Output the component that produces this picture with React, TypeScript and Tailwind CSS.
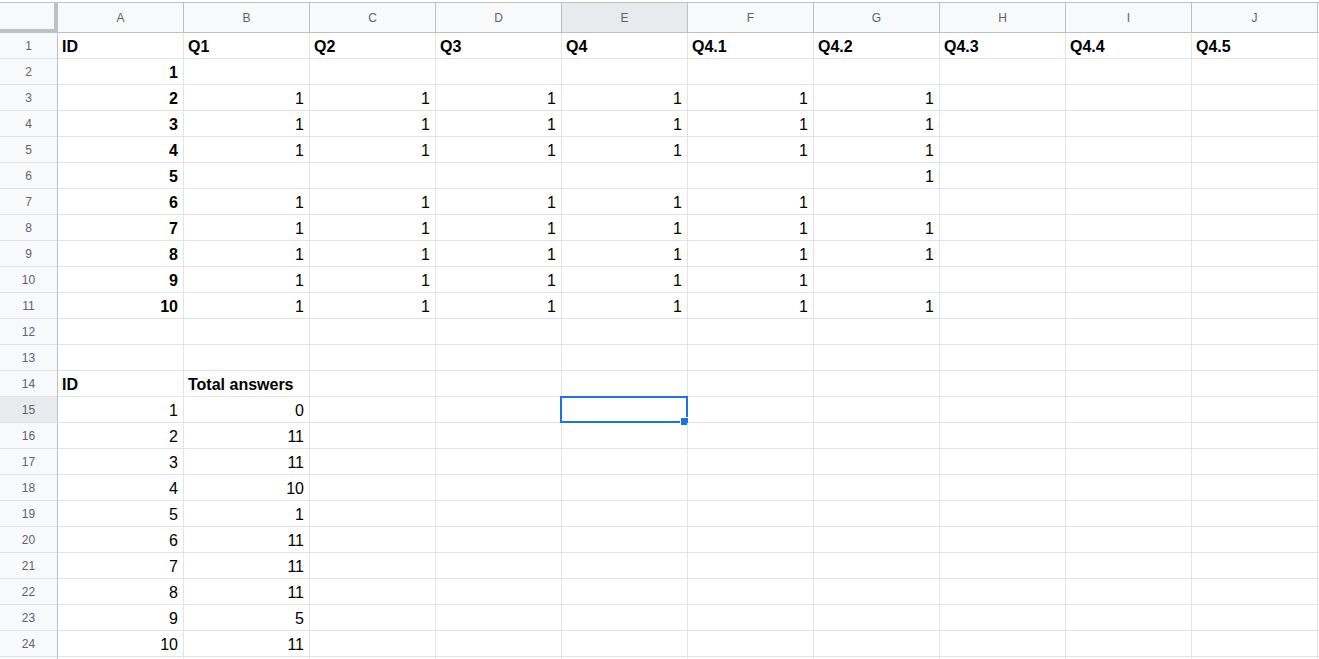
import React from 'react'

const cols = ['A', 'B', 'C', 'D', 'E', 'F', 'G', 'H', 'I', 'J']

type Cell = { v: string; bold?: boolean; left?: boolean }

const top: (string | null)[][] = [
  [null],
  ['1', '1', '1', '1', '1', '1'],
  ['1', '1', '1', '1', '1', '1'],
  ['1', '1', '1', '1', '1', '1'],
  [null, null, null, null, null, '1'],
  ['1', '1', '1', '1', '1'],
  ['1', '1', '1', '1', '1', '1'],
  ['1', '1', '1', '1', '1', '1'],
  ['1', '1', '1', '1', '1'],
  ['1', '1', '1', '1', '1', '1'],
]

const totals = [
  ['1', '0'],
  ['2', '11'],
  ['3', '11'],
  ['4', '10'],
  ['5', '1'],
  ['6', '11'],
  ['7', '11'],
  ['8', '11'],
  ['9', '5'],
  ['10', '11'],
]

function buildRows(): Cell[][] {
  const rows: Cell[][] = []
  rows.push(['ID', 'Q1', 'Q2', 'Q3', 'Q4', 'Q4.1', 'Q4.2', 'Q4.3', 'Q4.4', 'Q4.5'].map((v) => ({ v, bold: true, left: true })))
  top.forEach((r, i) => {
    const row: Cell[] = [{ v: String(i + 1), bold: true }]
    for (let c = 0; c < 9; c++) row.push({ v: r[c] ?? '' })
    rows.push(row)
  })
  rows.push([], [])
  rows.push([
    { v: 'ID', bold: true, left: true },
    { v: 'Total answers', bold: true, left: true },
  ])
  totals.forEach(([a, b]) => rows.push([{ v: a }, { v: b }]))
  rows.push([])
  return rows
}

export default function App() {
  const rows = buildRows()

  return (
    <div
      className="w-[1319px] h-[659px] overflow-hidden bg-white pt-[2px]"
      style={{ fontFamily: '"Liberation Sans", Arial, sans-serif' }}
    >
      {/* column headers */}
      <div className="grid grid-cols-[58px_repeat(10,126px)_1fr] h-[31px]">
        <div className="bg-[#f8f9fa] border-t border-[#c0c0c0] border-r-4 border-b-4 border-r-[#c0c0c0] border-b-[#c0c0c0]" />
        {cols.map((c) => (
          <div
            key={c}
            className={`flex items-center justify-center border-t border-r border-b border-[#c0c0c0] text-[12px] text-[#5f6368] ${
              c === 'E' ? 'bg-[#e8eaed]' : 'bg-[#f8f9fa]'
            }`}
          >
            {c}
          </div>
        ))}
        <div className="bg-[#f8f9fa] border-t border-b border-[#c0c0c0]" />
      </div>

      {/* rows */}
      {rows.map((row, r) => (
        <div key={r} className="grid grid-cols-[58px_repeat(10,126px)_1fr] h-[26px]">
          <div
            className={`flex items-center justify-center border-r border-r-[#c0c0c0] border-b border-b-[#e1e1e1] text-[12px] text-[#5f6368] ${
              r === 14 ? 'bg-[#e8eaed]' : 'bg-[#f8f9fa]'
            }`}
          >
            {r < 24 ? r + 1 : ''}
          </div>
          {cols.map((c, ci) => {
            const cell = row[ci]
            return (
              <div
                key={c}
                className={`relative flex items-end pb-[2px] border-r border-b border-[#e2e3e3] text-[16px] leading-[18px] text-black ${
                  cell?.left ? 'justify-start pl-[4px]' : 'justify-end pr-[5px]'
                } ${cell?.bold ? 'font-bold' : ''}`}
              >
                {cell?.v}
                {r === 14 && c === 'E' && (
                  <>
                    <div className="absolute left-[-2px] top-[-1px] w-[128px] h-[27px] border-2 border-[#1a73e8]" />
                    <div className="absolute left-[118px] top-[20px] w-[9px] h-[9px] bg-[#1a73e8] border border-white" />
                  </>
                )}
              </div>
            )
          })}
          <div className="border-b border-[#e2e3e3]" />
        </div>
      ))}
    </div>
  )
}
